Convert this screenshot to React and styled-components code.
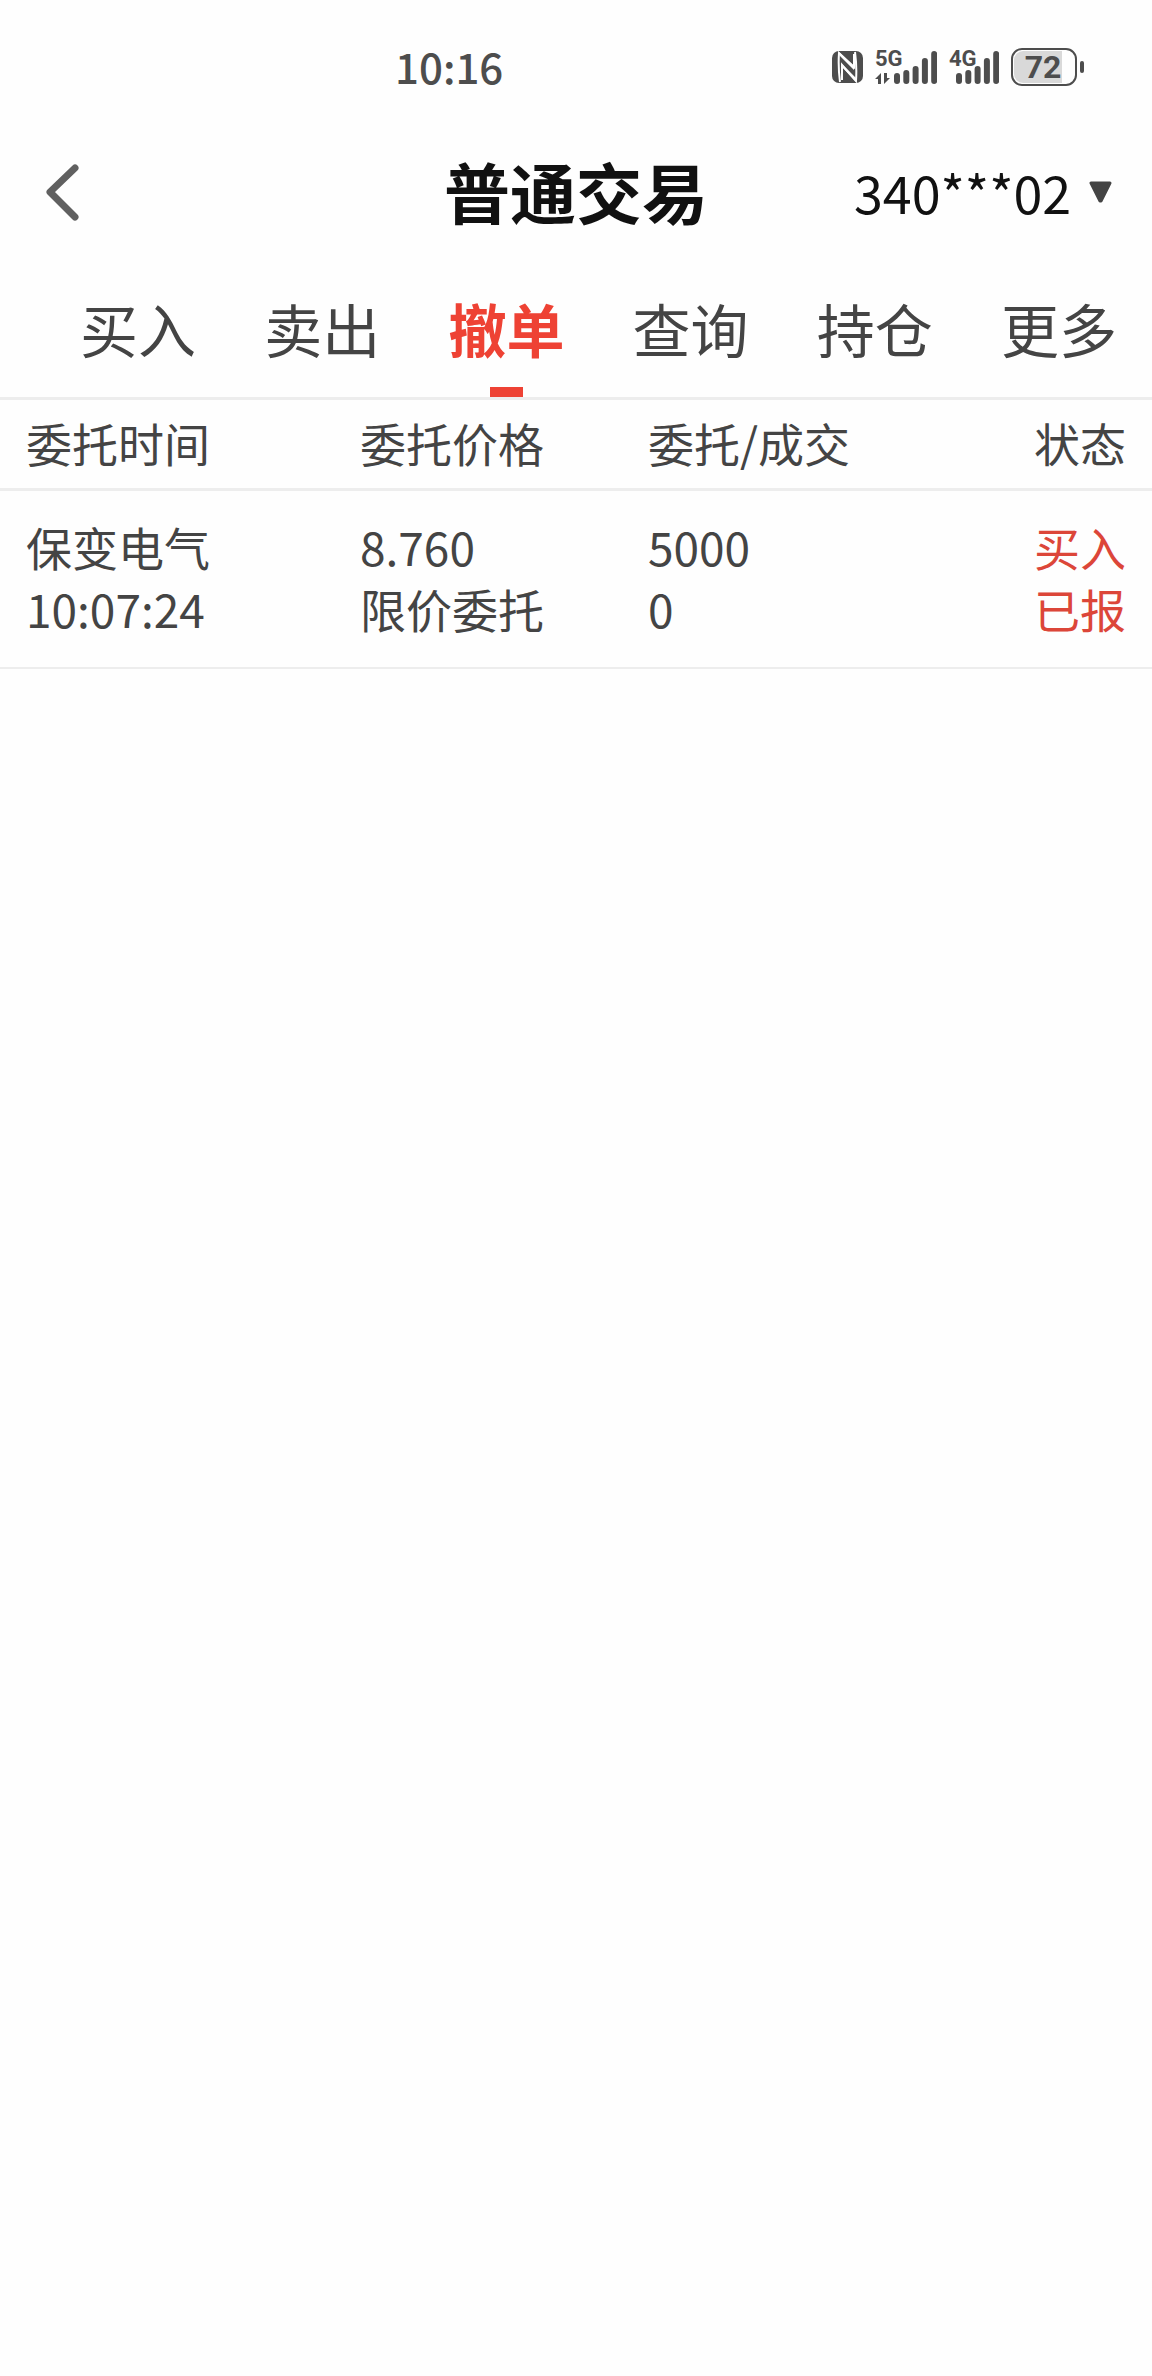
import React, { useState } from "react";
import styled, { createGlobalStyle } from "styled-components";

const GlobalStyle = createGlobalStyle`
  *, *::before, *::after { box-sizing: border-box; }
  body {
    margin: 0;
    background: #fefefe;
    color: #444;
    font-family: "Noto Sans CJK SC", "Noto Sans", sans-serif;
  }
  button, select { font: inherit; color: inherit; }
`;

const Screen = styled.div`
  min-height: 100vh;
  background: #fefefe;
`;

const StatusBar = styled.div`
  display: grid;
  grid-template-columns: 1fr auto;
  align-items: center;
  height: 134px;
  padding: 0 68px 0 395px;
  color: #4d4d4d;
`;

const Clock = styled.time`
  padding-bottom: 2px;
  font-size: 42px;
  line-height: 64px;
  font-weight: 500;
`;

const StatusIcons = styled.div`
  display: flex;
  align-items: center;
  gap: 12px;

  svg { display: block; }
`;

const NavBar = styled.header`
  display: grid;
  grid-template-columns: 1fr auto 1fr;
  align-items: center;
  height: 116px;
  padding: 0 40px;
`;

const BackButton = styled.button`
  justify-self: start;
  display: flex;
  padding: 6px;
  border: 0;
  background: none;
`;

const Title = styled.h1`
  margin: 0;
  padding-bottom: 4px;
  color: #111;
  font-size: 66px;
  line-height: 96px;
  font-weight: 700;
`;

const Account = styled.label`
  justify-self: end;
  display: flex;
  align-items: center;
  gap: 17px;
`;

const AccountSelect = styled.select`
  appearance: none;
  padding: 0;
  border: 0;
  background: none;
  color: #111;
  font-size: 52px;
  line-height: 80px;
`;

const Tabs = styled.nav`
  display: flex;
  height: 150px;
  padding: 0 1px 0 46px;
  border-bottom: 3px solid #ededed;
`;

const Tab = styled.button`
  flex: 1;
  display: flex;
  flex-direction: column;
  align-items: center;
  justify-content: space-between;
  padding: 36px 0 0;
  border: 0;
  background: none;
  color: ${(p) => (p.$active ? "#ee4234" : "#444")};
  font-size: 58px;
  line-height: 84px;
  font-weight: ${(p) => (p.$active ? 700 : 400)};
  white-space: nowrap;

  &::after {
    content: "";
    width: 33px;
    height: 10px;
    background: ${(p) => (p.$active ? "#ee4234" : "transparent")};
  }
`;

const Orders = styled.table`
  width: 100%;
  table-layout: fixed;
  border-collapse: separate;
  border-spacing: 0;
  font-size: 46px;
  line-height: 62px;
`;

const HeadCell = styled.th`
  width: ${(p) => p.$width};
  padding: 11px 0 15px;
  border-bottom: 3px solid #ededed;
  font-weight: 400;
  text-align: left;

  &:first-child { padding-left: 26px; }
  &:last-child { padding-right: 26px; text-align: right; }
`;

const Cell = styled.td`
  padding: 24px 0 28px;
  border-bottom: 2px solid #ededed;

  &:first-child { padding-left: 26px; }
  &:last-child { padding-right: 26px; text-align: right; color: #dc4639; }
`;

const Line = styled.div`
  white-space: nowrap;
`;

const IconLabel = styled.text`
  font-family: Roboto, sans-serif;
  font-size: ${(p) => p.$size}px;
  font-weight: 700;
  fill: #4d4d4d;
`;

const NfcIcon = () => (
  <svg width="31" height="32" viewBox="0 0 31 32" aria-hidden="true">
    <rect width="31" height="32" rx="7" fill="#4d4d4d" />
    <g fill="none" stroke="#fefefe" strokeWidth="2">
      <path d="M8 31Q6 16 7 2l15 14V3" />
      <path d="M23 1q2 15 1 29L10 14v15" />
    </g>
    <path d="M7 1l15 14v4L8 5zM10 13l14 14v4L10 16z" fill="#fefefe" />
  </svg>
);

const bars = [11, 14, 18, 26, 33];

function Signal({ label, width, barX, data }) {
  return (
    <svg width={width} height="48" viewBox={`0 -6 ${width} 48`} role="img" aria-label={label}>
      <IconLabel $size={22} x="0" y="17">{label}</IconLabel>
      {data && (
        <path d="M0 30l6-6v11H3v-5zM9 24v11l6-6h-3v-5z" fill="#4d4d4d" />
      )}
      {bars.map((h, i) => (
        <rect key={h} x={barX + i * 9.3} y={35 - h} width="6" height={h} rx="3" fill="#4d4d4d" />
      ))}
    </svg>
  );
}

const Battery = () => (
  <svg width="73" height="48" viewBox="0 -5 73 48" role="img" aria-label="72%">
    <path d="M12 3h39v32H12a9 9 0 0 1-9-9V12a9 9 0 0 1 9-9z" fill="#d9d9d9" />
    <rect x="1" y="1" width="64" height="36" rx="10" fill="none" stroke="#4d4d4d" strokeWidth="2" />
    <rect x="69" y="13" width="4" height="12" rx="2" fill="#4d4d4d" />
    <IconLabel $size={32} x="32" y="30" textAnchor="middle">72</IconLabel>
  </svg>
);

const tabs = ["买入", "卖出", "撤单", "查询", "持仓", "更多"];

const columns = [
  { title: "委托时间", width: "31.25%" },
  { title: "委托价格", width: "25%" },
  { title: "委托/成交", width: "25%" },
  { title: "状态", width: "auto" },
];

const orders = [
  [
    ["保变电气", "10:07:24"],
    ["8.760", "限价委托"],
    ["5000", "0"],
    ["买入", "已报"],
  ],
];

export default function App() {
  const [active, setActive] = useState("撤单");

  return (
    <>
      <GlobalStyle />
      <Screen>
        <StatusBar>
          <Clock>10:16</Clock>
          <StatusIcons>
            <NfcIcon />
            <Signal label="5G" width={62} barX={19} data />
            <Signal label="4G" width={50} barX={7} />
            <Battery />
          </StatusIcons>
        </StatusBar>

        <NavBar>
          <BackButton type="button" aria-label="返回">
            <svg width="33" height="57" viewBox="0 0 33 57" aria-hidden="true">
              <path
                d="M29 4L4 28l25 25"
                fill="none"
                stroke="#606060"
                strokeWidth="7"
                strokeLinecap="round"
                strokeLinejoin="round"
              />
            </svg>
          </BackButton>
          <Title>普通交易</Title>
          <Account>
            <AccountSelect aria-label="账户">
              <option>340***02</option>
            </AccountSelect>
            <svg width="23" height="23" viewBox="0 0 23 23" aria-hidden="true">
              <path
                d="M2 2h19l-9 18h-1z"
                fill="#444"
                stroke="#444"
                strokeWidth="3"
                strokeLinejoin="round"
              />
            </svg>
          </Account>
        </NavBar>

        <Tabs>
          {tabs.map((name) => (
            <Tab
              key={name}
              type="button"
              $active={name === active}
              aria-pressed={name === active}
              onClick={() => setActive(name)}
            >
              {name}
            </Tab>
          ))}
        </Tabs>

        <Orders>
          <thead>
            <tr>
              {columns.map((c) => (
                <HeadCell key={c.title} scope="col" $width={c.width}>{c.title}</HeadCell>
              ))}
            </tr>
          </thead>
          <tbody>
            {orders.map((row, r) => (
              <tr key={r}>
                {row.map((lines, i) => (
                  <Cell key={i}>
                    {lines.map((t) => <Line key={t}>{t}</Line>)}
                  </Cell>
                ))}
              </tr>
            ))}
          </tbody>
        </Orders>
      </Screen>
    </>
  );
}
